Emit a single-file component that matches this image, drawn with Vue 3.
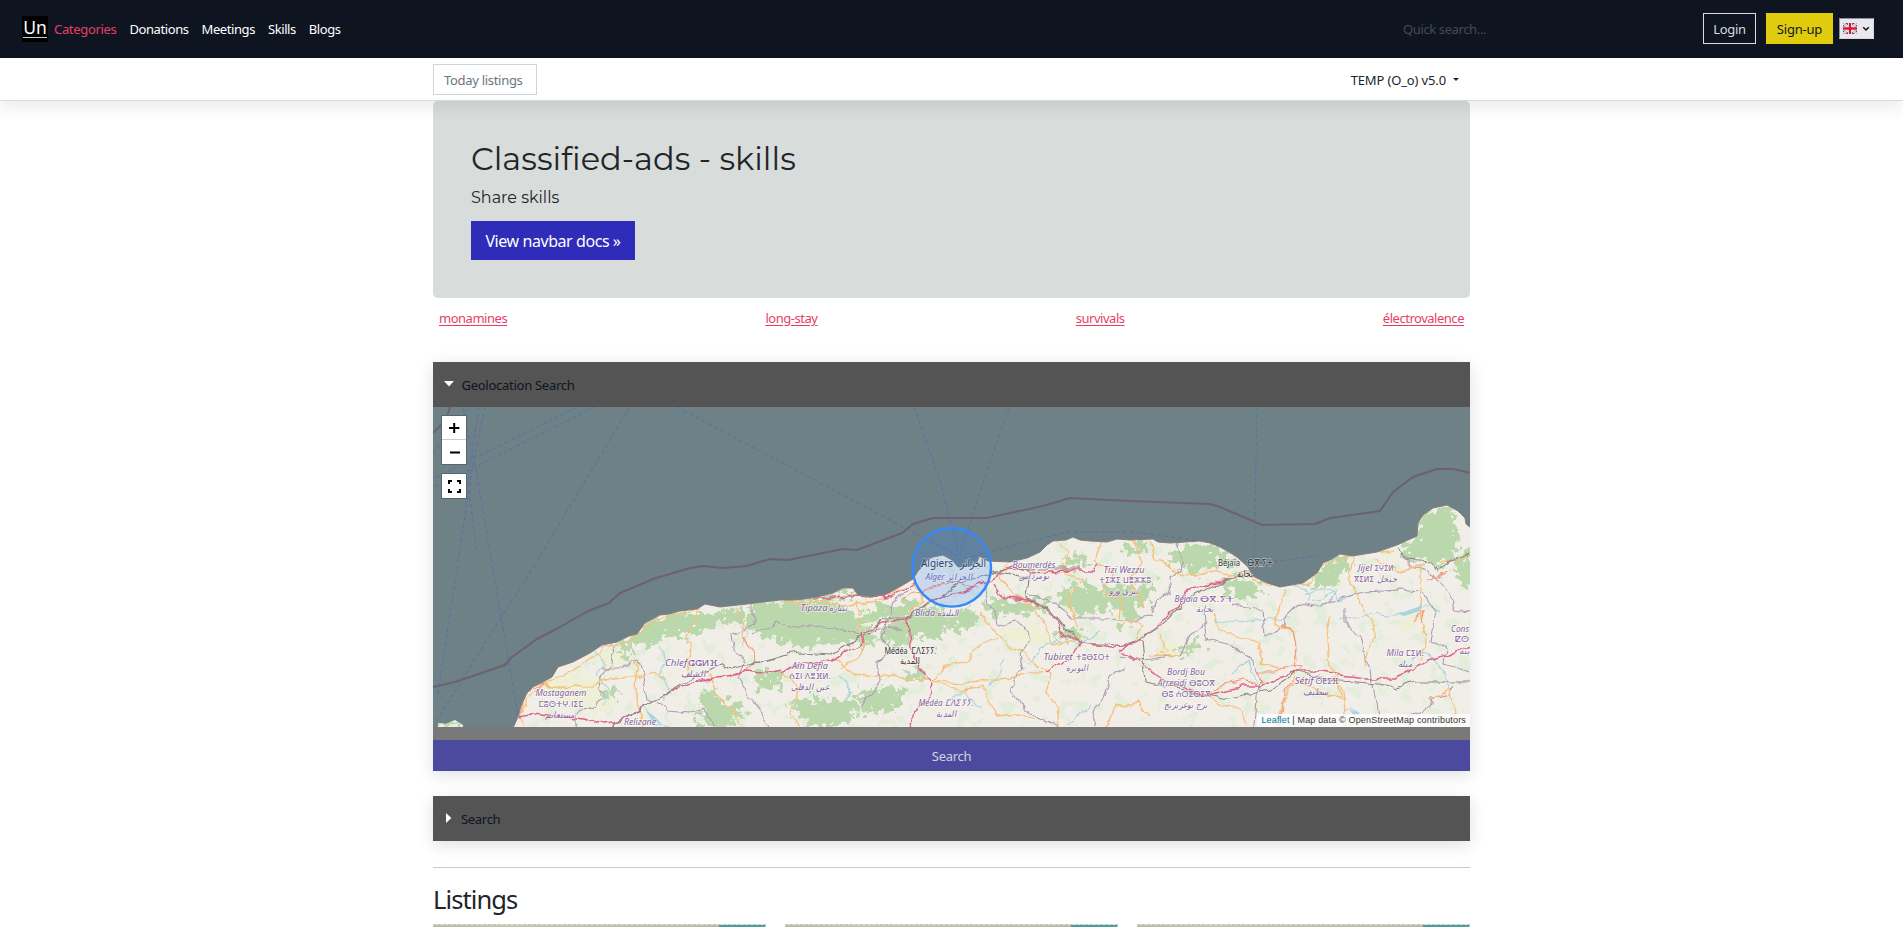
<script setup>
const navItems = ['Categories', 'Donations', 'Meetings', 'Skills', 'Blogs']
const tags = ['monamines', 'long-stay', 'survivals', 'électrovalence']

const coast =
  'M513,728 518,717 521,706 527,693 533,687 543,682 552,677 558,667 573,662 590,653 602,645 617,642 629,636 637,634 642,627 645,623 660,615 669,614 680,611 697,609 705,604 720,607 747,604 780,600 797,600 817,597 833,593 843,588 853,588 858,595 870,597 887,594 903,585 913,579 918,571 923,566 927,560 933,557 943,555 952,560 958,567 970,566 977,563 979,556 988,561 1010,562 1027,558 1040,552 1047,545 1053,541 1066,540 1073,537 1080,540 1090,541 1107,542 1117,539 1130,540 1153,539 1158,542 1170,543 1200,541 1210,543 1220,547 1229,552 1237,557 1248,567 1253,576 1267,583 1280,587 1303,583 1317,573 1323,563 1332,559 1340,554 1352,556 1377,552 1397,545 1417,536 1418,523 1423,515 1433,508 1447,505 1458,511 1465,518 1466,524 1471,528'

const woods = [
  'M616,646 638,634 650,620 672,613 698,612 720,614 742,608 745,622 722,626 702,628 686,638 668,634 655,646 640,642 628,655 616,652Z',
  'M748,606 780,601 833,596 838,606 866,616 880,604 905,606 896,620 868,622 845,636 815,640 795,630 780,642 755,634 748,622Z',
  'M780,621 802,626 830,624 846,632 870,628 878,640 860,646 830,640 805,648 780,640Z',
  'M834,592 843,588 853,588 858,596 842,598Z',
  'M888,610 905,600 917,598 914,614 896,622 886,618Z',
  'M880,628 908,618 925,606 942,610 950,618 968,606 980,620 966,630 948,628 936,642 915,636 900,646 882,640Z',
  'M982,602 1000,598 1026,602 1050,598 1045,612 1022,616 1000,612 986,614Z',
  'M1060,590 1084,580 1094,592 1118,584 1140,588 1156,576 1150,596 1132,614 1106,606 1088,616 1066,608Z',
  'M1122,548 1138,542 1150,546 1144,554 1128,556Z',
  'M1166,552 1182,546 1206,544 1226,552 1240,562 1236,570 1216,562 1198,574 1180,566 1170,568Z',
  'M1222,584 1238,574 1254,578 1266,586 1260,594 1244,600 1232,598Z',
  'M1318,574 1326,562 1342,556 1350,562 1342,578 1328,590 1308,582Z',
  'M1398,548 1418,536 1418,522 1424,514 1446,507 1456,514 1450,526 1460,540 1452,556 1438,566 1424,560 1404,558Z',
  'M1454,560 1472,548 1472,586 1458,580Z',
  'M700,694 714,688 724,700 742,704 744,716 722,728 700,727Z',
  'M790,704 812,696 832,702 850,698 858,712 840,727 812,727 800,716Z',
  'M752,678 768,668 784,674 778,688 760,690Z',
  'M856,692 886,686 904,690 900,706 880,716 862,708Z',
  'M902,676 918,668 926,676 914,684Z',
  'M1180,648 1196,642 1206,640 1200,650 1186,656Z',
  'M1060,560 1076,554 1090,562 1078,570Z',
  'M433,726 440,722 452,721 458,720 463,728 433,728Z',
  'M1120,600 1134,606 1140,620 1124,628Z',
  'M1052,634 1076,628 1090,636 1072,642Z',
  'M600,690 614,686 618,694 604,698Z'
]
const scrub = [
  'M540,686 580,672 600,682 620,706 590,712 560,702Z',
  'M590,656 620,648 628,662 606,672Z',
  'M860,612 890,606 884,624 858,626Z',
  'M1000,628 1030,622 1056,634 1036,646 1010,642Z',
  'M1162,644 1180,636 1178,656 1160,660Z',
  'M1376,560 1392,548 1398,554 1390,562Z',
  'M1394,624 1412,616 1420,626 1404,634Z',
  'M1250,700 1264,696 1266,706 1254,710Z',
  'M650,622 680,618 690,630 666,640Z'
]
const waters = [
  'M594,650 604,664 597,676 610,690 604,706',
  'M660,648 666,664 658,676 672,688 664,700',
  'M646,706 652,720 668,727',
  'M742,606 738,620 748,634 740,648',
  'M838,676 852,688 846,700',
  'M950,700 966,692 976,706 982,708',
  'M1026,664 1040,648 1060,640 1080,644 1100,630',
  'M1006,660 996,676 990,686',
  'M1296,586 1310,592 1306,602 1322,600 1336,590 1330,604 1318,608',
  'M1304,594 1322,586 1342,600 1354,594',
  'M1340,620 1366,614 1390,616 1418,610 1426,604 1440,612',
  'M1232,676 1248,660 1256,680 1262,692',
  'M1090,706 1076,720 1070,727',
  'M1214,618 1240,624 1262,618 1290,620',
  'M1344,710 1356,712 1366,718',
  'M1412,660 1424,650 1440,666 1450,690'
]
const borders = [
  'M614,643 610,664 602,676 598,688 604,694 596,706 580,708 572,718 578,728',
  'M602,668 622,668 638,662 642,676 646,700 662,704 668,712 690,714 700,708 712,728',
  'M752,604 752,624 732,634 734,650 744,662 738,680 748,696 762,716 770,728',
  'M752,634 774,624 790,628 812,626 836,628 860,634 892,626 902,632',
  'M912,588 890,604 886,628 880,640 892,652 878,662 880,680 866,698 862,706',
  'M984,584 988,606 996,612 998,626 1016,622 1030,640 1018,656 1022,670 1010,688 1020,704 1034,716 1060,728',
  'M1030,596 1044,598 1060,608 1072,618 1106,618 1128,622',
  'M1174,544 1184,564 1170,576 1172,590 1156,600 1152,614 1130,624',
  'M1204,610 1206,640 1232,646 1250,658 1262,680 1256,696 1254,728',
  'M1230,604 1262,608 1264,636 1280,630 1286,618 1300,604 1318,608 1336,600 1362,592 1400,590 1420,592',
  'M1346,606 1346,622 1358,636 1362,652 1372,668 1376,700 1382,728',
  'M1398,548 1410,566 1430,570 1436,580 1454,600 1452,610 1470,612',
  'M1424,594 1436,612 1430,640 1446,648 1444,664 1470,672',
  'M1120,656 1146,662 1166,658 1180,656 1190,634 1206,622',
  'M1096,728 1092,712 1102,700 1110,676 1126,668',
  'M1408,718 1430,708 1432,698 1450,694 1456,684'
]
const roads = [
  'M518,717 526,700 542,684 566,676 580,664 600,654 604,646 624,642 640,632 646,624 674,613 700,610',
  'M542,684 562,686 584,688 606,680 640,676 652,672 666,680',
  'M698,612 694,626 686,638 690,654 686,674',
  'M736,610 744,624 742,634 752,650 754,662',
  'M780,602 820,602 850,606 882,600 908,586',
  'M856,602 858,622 864,644 858,660 838,668',
  'M912,582 922,600 910,614',
  'M980,614 986,618 998,636 1024,656 1040,668 1052,674 1046,690 1056,708 1058,728',
  'M932,680 960,684 984,680 1010,678 1046,672',
  'M932,680 944,666 966,662 976,648 1000,640',
  'M932,680 960,692 984,686 990,704 996,716 1020,714 1034,720',
  'M834,660 854,674 900,678 930,678',
  'M1010,562 1000,578 1012,594 1028,600 1042,624 1054,644 1076,640 1078,636',
  'M1054,541 1070,552 1064,572 1084,578 1070,598 1078,632',
  'M1102,542 1094,560 1112,572 1104,590 1122,600 1120,620 1142,626 1136,640',
  'M1134,540 1142,562 1128,580 1140,592 1144,610',
  'M1150,540 1158,560 1180,574 1206,572 1234,574 1254,580 1270,586 1310,582 1326,564 1348,554 1392,550',
  'M1286,588 1280,606 1276,622 1294,634 1296,658 1294,666',
  'M1160,634 1168,652 1150,658 1180,656',
  'M1214,614 1222,630 1258,644 1262,664 1280,668',
  'M1330,618 1328,640 1330,668 1336,676 1340,696',
  'M1352,556 1350,584 1364,610 1374,628 1372,640 1364,670',
  'M1420,566 1422,592 1420,614 1426,640 1420,660',
  'M1294,670 1290,690 1280,712 1276,728',
  'M1338,674 1344,700 1346,728',
  'M1298,680 1320,694 1346,698',
  'M1200,690 1220,704 1242,712 1246,728',
  'M520,718 522,728',
  'M636,662 634,690 640,712 644,728',
  'M708,674 718,694 736,712 742,728',
  'M780,672 800,690 790,710 798,728',
  'M1440,562 1456,560 1472,552',
  'M1106,728 1116,706 1140,702 1150,716',
  'M1376,560 1398,570 1424,564',
  'M1430,700 1450,690 1454,712 1446,727'
]
const trunks = [
  'M518,717 534,713 556,716 584,719 600,724 620,720 640,710 670,692 700,680 730,678 746,672 764,674 780,670',
  'M780,674 800,664 830,660 846,652 864,642 862,634 884,622 908,620 926,602 950,594 976,586 1000,574 1012,568',
  'M908,620 910,648 920,668 928,676 932,684 928,702 914,712 906,728',
  'M1012,568 1030,572 1070,570 1092,570 1098,564',
  'M994,584 1002,598 1030,600 1046,608 1058,622 1064,636 1084,642 1110,646 1136,642',
  'M1046,674 1068,656 1082,642',
  'M1136,642 1160,624 1176,608 1188,592 1214,584 1246,572',
  'M1120,651 1132,640 M1122,652 1148,668 1176,686 1208,694 1240,686 1262,686 1276,678 1292,672 1320,672 1364,678 1394,678 1410,670 1428,660 1456,652 1472,646',
  'M812,598 836,598 858,596 890,598 916,582'
]
const orangeTrunks = [
  'M1264,684 1258,672 1276,672 1290,664 1302,666 1298,672',
  'M1282,624 1294,634 1296,650 1292,664',
  'M1280,728 1282,704 1290,684',
  'M518,717 524,692 542,684',
  'M744,636 752,648 754,662 744,672 728,678',
  'M1428,580 1452,572',
  'M1200,696 1224,684 1246,680 1262,688',
  'M904,598 924,588 950,582 980,588',
  'M1412,620 1424,612 1420,624'
]
const rails = [
  'M610,728 612,722 640,710 680,686 700,674 722,664 726,670 756,662 780,656',
  'M780,656 800,652 830,654 846,646 856,638 874,632 884,618 908,618 926,604 940,598 956,584 994,572 1040,568 1080,568',
  'M994,572 1030,580 1028,598 1050,610 1068,632 1080,642 1120,644 1142,638 1166,622 1186,600 1236,576',
  'M1142,640 1146,682 1180,690 1230,698 1270,690 1294,672',
  'M1294,672 1330,680 1380,684 1396,688 1416,682 1472,682',
  'M780,655 752,664',
  'M1398,548 1404,560 1432,562 1438,572 1454,558 1472,552'
]
const ferries = [
  'M577,407 473,459 433,479', 'M595,407 473,468 433,487', 'M629,408 545,548 437,720',
  'M677,407 777,460 958,556', 'M485,407 473,463 437,700', 'M463,407 476,470 487,535 518,715',
  'M479,407 468,480 476,549', 'M470,407 433,453', 'M914,407 940,480 958,553',
  'M1009,407 984,480 960,555', 'M958,560 1000,549 1067,532 1135,532 1200,541',
  'M1257,407 1254,565', 'M1253,565 1320,555'
]
const labels = [
  { x: 561, y: 696, t: 'Mostaganem', l: 51 },
  { x: 561, y: 707, t: 'ⵎⵓⵙⵜⵖ.ⵏⵉⵎ', l: 45, up: 1 },
  { x: 560, y: 718, t: 'مستغانم', l: 30 },
  { x: 640, y: 725, t: 'Relizane', l: 32 },
  { x: 676, y: 666, t: 'Chlef', l: 22 },
  { x: 703, y: 666, t: 'ⵛⵛⵍⴼ', l: 30, up: 1 },
  { x: 693, y: 677, t: 'الشلف', l: 25 },
  { x: 814, y: 611, t: 'Tipaza', l: 27 },
  { x: 838, y: 611, t: 'تيبازة', l: 19 },
  { x: 810, y: 669, t: 'Ain Defla', l: 36 },
  { x: 810, y: 679, t: 'ⵄⵉⵏ ⴷⴻⴼⵍ.', l: 42, up: 1 },
  { x: 810, y: 690, t: 'عين الدفلى', l: 39 },
  { x: 949, y: 580, t: 'Alger الجزائر', l: 47 },
  { x: 925, y: 616, t: 'Blida', l: 20 },
  { x: 948, y: 616, t: 'البليدة', l: 22 },
  { x: 1034, y: 568, t: 'Boumerdès', l: 43 },
  { x: 1034, y: 579, t: 'بومرداس', l: 31 },
  { x: 1124, y: 573, t: 'Tizi Wezzu', l: 41 },
  { x: 1125, y: 583, t: 'ⵜⵉⵣⵉ ⵡⴻⵣⵣⵓ', l: 52, up: 1 },
  { x: 1124, y: 594, t: 'تيزي وزو', l: 30 },
  { x: 946, y: 706, t: 'Médéa ⵎⴷⵉⵢⵢ.', l: 55 },
  { x: 946, y: 717, t: 'المدية', l: 21 },
  { x: 1058, y: 660, t: 'Tubiret', l: 29 },
  { x: 1093, y: 660, t: 'ⵜⵓⴱⵉⵔⵜ', l: 34, up: 1 },
  { x: 1077, y: 671, t: 'البويرة', l: 22 },
  { x: 1186, y: 602, t: 'Béjaïa', l: 23 },
  { x: 1217, y: 602, t: 'ⴱⴳ.ⵢⵜ', l: 34, up: 1 },
  { x: 1205, y: 612, t: 'بجاية', l: 18 },
  { x: 1186, y: 675, t: 'Bordj Bou', l: 38 },
  { x: 1172, y: 686, t: 'Arreridj', l: 29 },
  { x: 1202, y: 686, t: 'ⴱⵓⵔⴳ', l: 26, up: 1 },
  { x: 1186, y: 697, t: 'ⴱⵓ ⵄⵔⵉⵔⵉⴳ', l: 49, up: 1 },
  { x: 1186, y: 708, t: 'برج بوعريريج', l: 44 },
  { x: 1304, y: 684, t: 'Sétif', l: 19 },
  { x: 1327, y: 684, t: 'ⵙⵟⵉⴼ', l: 23, up: 1 },
  { x: 1316, y: 695, t: 'سطيف', l: 26 },
  { x: 1365, y: 571, t: 'Jijel', l: 14 },
  { x: 1384, y: 571, t: 'ⵉⵖⵉⵍ', l: 19, up: 1 },
  { x: 1364, y: 582, t: 'ⴳⵉⵍⵉ', l: 20, up: 1 },
  { x: 1387, y: 582, t: 'جيجل', l: 20 },
  { x: 1395, y: 656, t: 'Mila', l: 17 },
  { x: 1415, y: 656, t: 'ⵎⵉⵍ.', l: 18, up: 1 },
  { x: 1405, y: 667, t: 'ميلة', l: 15 },
  { x: 1460, y: 632, t: 'Cons', l: 18 },
  { x: 1462, y: 642, t: 'ⵇⵙ', l: 14, up: 1 },
  { x: 1464, y: 654, t: 'ينة', l: 11 }
]
const cityLabels = [
  { x: 937, y: 567, t: 'Algiers', l: 32, s: 10.5 },
  { x: 973, y: 567, t: 'الجزائر', l: 26, s: 10.5 },
  { x: 896, y: 654, t: 'Médéa', l: 23, s: 9 },
  { x: 924, y: 654, t: 'ⵎⴷⵉⵢⵢ.', l: 25, s: 9 },
  { x: 910, y: 664, t: 'المدية', l: 20, s: 9 },
  { x: 1229, y: 566, t: 'Béjaïa', l: 22, s: 9 },
  { x: 1260, y: 566, t: 'ⴱⴳ.ⵢⵜ', l: 26, s: 9 },
  { x: 1245, y: 577, t: 'بجاية', l: 16, s: 9 }
]
const boundary =
  'M433,687 455,682 505,665 512,657 537,639 560,627 588,611 609,603 620,593 637,586 653,579 690,568 703,566 723,568 747,566 770,559 788,560 843,549 857,550 902,533 913,524 933,518 987,518 1043,506 1070,498 1130,501 1210,504 1220,507 1262,525 1315,524 1330,518 1380,511 1393,492 1413,477 1437,469 1453,469 1471,473'
</script>

<template>
  <div class="page">
    <header class="topbar">
      <div class="logo"><span>Un</span></div>
      <nav class="menu">
        <a v-for="(n, i) in navItems" :key="n" :class="['item', 'item-' + i]">{{ n }}</a>
      </nav>
      <div class="quick">Quick search...</div>
      <div class="btn login"><span>Login</span></div>
      <div class="btn signup"><span>Sign-up</span></div>
      <div class="lang">
        <svg width="14" height="11" viewBox="0 0 14 11">
          <rect width="14" height="11" fill="#3c4f8e" />
          <path d="M0,0 14,11M14,0 0,11" stroke="#fff" stroke-width="2.4" />
          <path d="M0,0 14,11M14,0 0,11" stroke="#d86a7c" stroke-width=".8" />
          <path d="M7,0V11M0,5.5H14" stroke="#fff" stroke-width="4.2" />
          <path d="M7,0V11M0,5.5H14" stroke="#d8182c" stroke-width="2.4" />
        </svg>
        <svg width="8" height="6" viewBox="0 0 8 6"><path d="M1.2,1.2 4,4 6.8,1.2" fill="none" stroke="#111" stroke-width="1.5" /></svg>
      </div>
    </header>

    <div class="subbar">
      <div class="subinner">
        <div class="today"><span>Today listings</span></div>
        <div class="temp"><span>TEMP (O_o) v5.0</span><i class="caret"></i></div>
      </div>
    </div>

    <main class="wrap">
      <section class="hero">
        <h1>Classified-ads - skills</h1>
        <p>Share skills</p>
        <div class="docs"><span>View navbar docs »</span></div>
      </section>

      <div class="tags">
        <a v-for="t in tags" :key="t">{{ t }}</a>
      </div>

      <section class="panel geo">
        <div class="head">
          <svg class="down" width="10" height="6" viewBox="0 0 10 6"><path d="M0,0H10L5,5.4Z" fill="#fff" /></svg>
          <span class="geotitle">Geolocation Search</span>
        </div>
        <div class="map">
          <svg class="tiles" width="1037" height="320" viewBox="433 407 1037 320">
            <defs>
              <clipPath id="land"><path :d="coast + 'V728Z'" /><path d="M438,727V723L446,724 455,720 463,725V728Z" /></clipPath>
              <filter id="rough" x="-5%" y="-5%" width="110%" height="110%">
                <feTurbulence type="fractalNoise" baseFrequency=".13" numOctaves="4" seed="7" result="n" />
                <feDisplacementMap in="SourceGraphic" in2="n" scale="28" xChannelSelector="R" yChannelSelector="G" />
              </filter>
              <filter id="bend" filterUnits="userSpaceOnUse" x="433" y="407" width="1037" height="320">
                <feTurbulence type="fractalNoise" baseFrequency=".06" numOctaves="3" seed="3" result="n" />
                <feDisplacementMap in="SourceGraphic" in2="n" scale="10" xChannelSelector="R" yChannelSelector="G" />
              </filter>
              <filter id="speckle" filterUnits="userSpaceOnUse" x="433" y="500" width="1037" height="228">
                <feTurbulence type="fractalNoise" baseFrequency=".07" numOctaves="5" seed="12" />
                <feColorMatrix values="0 0 0 0 .74  0 0 0 0 .85  0 0 0 0 .68  14 0 0 0 -8.1" />
              </filter>
            </defs>
            <rect x="433" y="407" width="1037" height="320" fill="#6d8187" />
            <g fill="none" stroke="#6070a0" stroke-width="1.1" stroke-dasharray="4 3">
              <path v-for="f in ferries" :key="f" :d="f" />
            </g>
            <g fill="none" stroke="#6d6075" stroke-width="2" stroke-linejoin="round">
              <path :d="boundary" />
              <path d="M450,407 447,417 440,426 433,433" />
            </g>
            <g clip-path="url(#land)">
              <rect x="433" y="500" width="1037" height="228" fill="#f1eee8" />
              <rect x="433" y="500" width="1037" height="228" filter="url(#speckle)" opacity=".7" />
              <g filter="url(#rough)" fill="#eef0d5"><path v-for="s in scrub" :key="s" :d="s" /></g>
              <g filter="url(#rough)" fill="#bbd8ad"><path v-for="w in woods" :key="w" :d="w" /></g>
              <g filter="url(#bend)" fill="none" stroke-linejoin="round">
                <g stroke="#aad3df" stroke-width="1.1"><path v-for="w in waters" :key="w" :d="w" /></g>
                <g stroke="#ae9bb3" stroke-width="1.1"><path v-for="b in borders" :key="b" :d="b" /></g>
                <g stroke="#f8c078" stroke-width="1.3"><path v-for="r in roads" :key="r" :d="r" /></g>
                <g stroke="#f6977c" stroke-width="1.2"><path v-for="r in orangeTrunks" :key="r" :d="r" /></g>
                <g stroke="#df6488" stroke-width="1.4"><path v-for="r in trunks" :key="r" :d="r" /></g>
                <g stroke="#8d8985" stroke-width="1.2"><path v-for="r in rails" :key="r" :d="r" /></g>
              </g>
              <g fill="#aad3df"><path d="M646,711 654,716 662,724 652,720ZM1350,710 1360,713 1354,717ZM1398,614 1418,607 1422,603 1420,611 1404,616Z" /></g>
            </g>
            <path :d="coast" fill="none" stroke="#8c7b7b" stroke-width="1" />
            <g class="labels">
              <text v-for="l in labels" :key="l.x + l.t" :x="l.x" :y="l.y" :textLength="l.l" lengthAdjust="spacingAndGlyphs" :class="{ up: l.up }">{{ l.t }}</text>
            </g>
            <g class="cities">
              <text v-for="l in cityLabels" :key="l.x + l.t" :x="l.x" :y="l.y" :textLength="l.l" :font-size="l.s" lengthAdjust="spacingAndGlyphs">{{ l.t }}</text>
            </g>
            <circle cx="951.7" cy="567.3" r="39.3" fill="#38f" fill-opacity=".2" stroke="#3388ff" stroke-width="2.4" />
          </svg>
          <div class="controls">
            <div class="zoom">
              <div><svg width="24" height="23" viewBox="0 0 24 23"><path d="M7,12H17.4M12.2,7V17" stroke="#000" stroke-width="2" /></svg></div>
              <div><svg width="24" height="24" viewBox="0 0 24 24"><path d="M8,12.5H18" stroke="#000" stroke-width="2" /></svg></div>
            </div>
            <div class="full">
              <svg width="24" height="24" viewBox="0 0 24 24"><path d="M7,10V7H10M15,7H18V10M18,15V18H15M10,18H7V15" fill="none" stroke="#000" stroke-width="2" /></svg>
            </div>
          </div>
          <div class="attribution"><span><a>Leaflet</a> | Map data © OpenStreetMap contributors</span></div>
        </div>
        <div class="go">Search</div>
      </section>

      <section class="panel search">
        <div class="head">
          <svg class="right" width="6" height="10" viewBox="0 0 6 10"><path d="M0,0V10L5.4,5Z" fill="#fff" /></svg>
          <span class="searchtitle">Search</span>
        </div>
      </section>

      <hr />
      <h2>Listings</h2>
      <div class="cards">
        <div v-for="c in 3" :key="c" class="card"><i></i></div>
      </div>
    </main>
  </div>
</template>

<style>
body { background: #fff; overflow: hidden; }
</style>

<style scoped>
* { box-sizing: border-box; }
.page { height: 927px; overflow: hidden; font: 13px/20px "Noto Sans", sans-serif; color: #212529; letter-spacing: -.3px; white-space: nowrap; }
.topbar { height: 58px; background: #0e1521; display: flex; align-items: center; padding: 0 29px 0 22px; color: #fff; }
.logo { width: 26px; height: 26px; background: #000; padding: 0 1px; font-size: 17.5px; line-height: 23px; text-align: center; letter-spacing: 0; }
.logo span { display: block; height: 22px; border-bottom: 1px solid #ccc; }
.menu { display: flex; gap: 13px; margin-left: 6px; }
.item { letter-spacing: -.42px; }
.item-0 { color: #e83e66; letter-spacing: -.32px; }
.quick { margin-left: auto; width: 296px; height: 31px; border: 1px solid #101722; padding: 5px 8px; color: #454a51; margin-right: 13px; line-height: 19px; letter-spacing: -.38px; }
.btn { height: 31px; display: flex; align-items: center; justify-content: center; }
.login { width: 53px; border: 1px solid #d8dcdb; color: #d8dcdb; margin-right: 10px; margin-bottom: 1px; }
.signup { width: 67px; background: #e0cc0d; color: #0e1521; margin-right: 6px; margin-bottom: 1px; letter-spacing: -.2px; }
.lang { width: 35px; height: 21px; background: #e9e9ed; border: 1px solid #8f8f9d; border-right-color: #d8d8dc; border-bottom-color: #d8d8dc; display: flex; align-items: center; gap: 5px; padding-left: 3px; margin-bottom: 1px; }
.subbar { position: relative; z-index: 2; height: 43px; background: #fff; border-bottom: 1px solid #dadcdc; box-shadow: 0 8px 16px rgba(0, 0, 0, .07); }
.subinner { width: 1037px; margin: 0 auto; display: flex; justify-content: space-between; padding: 6px 11px 0 0; }
.today { width: 104px; height: 31px; border: 1px solid #ced4da; color: #6c757d; padding: 5px 10px; line-height: 20px; }
.temp { display: flex; align-items: center; gap: 7px; height: 31px; letter-spacing: -.14px; }
.caret { width: 0; border: 3px solid transparent; border-top-color: #212529; border-bottom: 0; }
.wrap { width: 1037px; margin: 0 auto; }
.hero { height: 197px; background: #d8dcdb; border-radius: 5px; padding: 39px 38px 0; font-family: "Montserrat", "Inter", sans-serif; }
h1 { font-size: 32px; line-height: 38px; font-weight: 400; margin: 0 0 8px; letter-spacing: .03px; }
.hero p { font-size: 16px; line-height: 24px; margin: 0 0 11px; letter-spacing: 0; }
.docs { width: 164px; height: 39px; background: #2f2cb9; color: #fff; font: 16px/41px "Noto Sans", sans-serif; text-align: center; letter-spacing: -.43px; }
.tags { display: flex; justify-content: space-between; padding: 10px 6px; height: 64px; color: #e83e66; letter-spacing: -.48px; }
.tags a { text-decoration: underline; text-underline-offset: 2px; }
.panel { box-shadow: 0 4px 16px rgba(0, 0, 0, .13); }
.head { height: 45px; background: #545454; color: #0e1521; display: flex; align-items: center; }
.down { margin: 0 7.5px 2px 11px; }
.geotitle { letter-spacing: -.27px; }
.right { margin: 0 9px 2px 13px; }
.geo { height: 409px; background: #787878; }
.map { position: relative; height: 320px; margin-bottom: 13px; }
.tiles { display: block; }
.labels text { font: italic 9px "Noto Sans", "DejaVu Sans", sans-serif; fill: #86619a; text-anchor: middle; stroke: #fff; stroke-opacity: .6; stroke-width: 1.6px; paint-order: stroke; letter-spacing: 0; }
.labels .up { font-style: normal; font-family: "DejaVu Sans", sans-serif; font-size: 8.5px; }
.cities text { font-family: "Noto Sans", "DejaVu Sans", sans-serif; fill: #333; text-anchor: middle; stroke: #fff; stroke-opacity: .5; stroke-width: 1.4px; paint-order: stroke; letter-spacing: 0; }
.controls { position: absolute; left: 8px; top: 8px; }
.zoom, .full { width: 26px; border: 1px solid #56686e; background: #fff; }
.zoom { height: 50px; }
.zoom div { height: 24px; }
.zoom div:first-child { border-bottom: 1px solid #ccc; }
.full { height: 26px; margin-top: 8px; }
.controls svg { display: block; }
.attribution { position: absolute; right: 0; bottom: 0; height: 13px; width: 213px; background: rgba(255, 255, 255, .75); font: 9px/13px "Liberation Sans", sans-serif; color: #333; text-align: right; padding-right: 4px; letter-spacing: .17px; }
.attribution a { color: #0078a8; }
.go { height: 31px; background: #4b4a9f; color: #d2d2dc; text-align: center; line-height: 32px; }
.search { margin-top: 25px; height: 45px; }
hr { border: 0; height: 1px; background: #c8c9ca; margin: 26px 0 16px; }
h2 { margin: 0; font-size: 25.5px; line-height: 31px; font-weight: 400; letter-spacing: -.9px; }
.cards { display: grid; grid-template-columns: repeat(3, 333px); justify-content: space-between; margin-top: 9px; }
.card { height: 40px; border: 1px dashed #a9d3c6; background: linear-gradient(90deg, #c2b7a3, #cdc3ae 20%, #bfb7a6) padding-box, #e1ece6 border-box; }
.card i { display: block; width: 46px; height: 40px; margin-left: auto; background: #559a9b; }
</style>
